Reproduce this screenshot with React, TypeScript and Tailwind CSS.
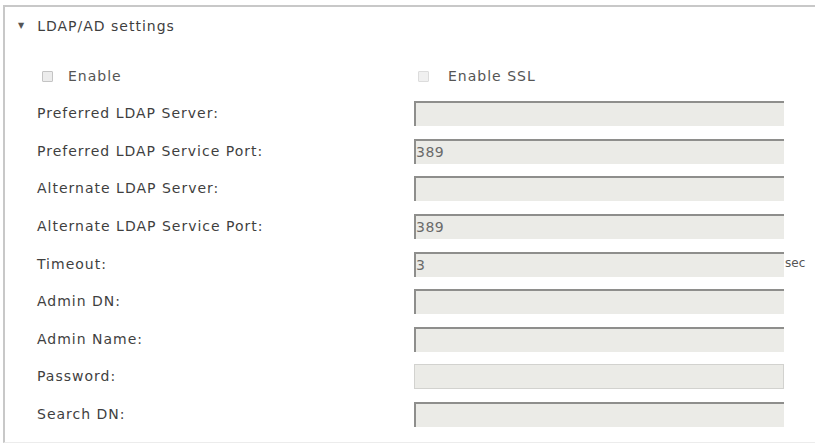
import React from "react";

type Row = { label: string; value?: string; suffix?: string; flat?: boolean };

const rows: Row[] = [
  { label: "Preferred LDAP Server:" },
  { label: "Preferred LDAP Service Port:", value: "389" },
  { label: "Alternate LDAP Server:" },
  { label: "Alternate LDAP Service Port:", value: "389" },
  { label: "Timeout:", value: "3", suffix: "sec" },
  { label: "Admin DN:" },
  { label: "Admin Name:" },
  { label: "Password:", flat: true },
  { label: "Search DN:" },
];

function Box({ faded }: { faded?: boolean }) {
  return (
    <span
      className={
        "inline-block w-[11px] h-[11px] border rounded-[1px] " +
        (faded ? "border-[#dcdcdc] bg-[#f0f0f0]" : "border-[#c4c4c4] bg-[#ececec]")
      }
    />
  );
}

function Field({ row }: { row: Row }) {
  return (
    <div className="flex items-center h-[37.6px]">
      <div className="w-[409px] pl-[32px] text-[14px] tracking-[1px] text-[#3f3f3f]">{row.label}</div>
      <div
        className={
          "w-[370px] h-[25px] bg-[#ebebe7] flex items-center text-[14px] tracking-[0.5px] text-[#6a6a6a] " +
          (row.flat
            ? "border border-[#d2d2cf]"
            : "border-t-2 border-l-2 border-t-[#8e8e8c] border-l-[#8e8e8c]")
        }
      >
        {row.value}
      </div>
      {row.suffix && <span className="ml-[1px] -mt-[2px] text-[12px] text-[#555]">{row.suffix}</span>}
    </div>
  );
}

export default function App() {
  return (
    <div
      className="w-[815px] h-[445px] bg-white pt-[5px] pl-[3px] overflow-hidden"
      style={{ fontFamily: '"DejaVu Sans", Verdana, sans-serif' }}
    >
      <div className="h-[438px] border-t-2 border-l-2 border-[#c8c8c8] border-b border-b-[#ececec]">
        <div className="flex items-center h-[38px] pl-[13px] text-[14px] tracking-[1px] text-[#3f3f3f]">
          <span className="text-[8px] mr-[12px] text-[#555]">▼</span>
          LDAP/AD settings
        </div>
        <div className="flex items-center h-[40px] mt-[11px]">
          <div className="w-[409px] pl-[37px] flex items-center gap-[15px] text-[14px] tracking-[1px] text-[#555]">
            <Box />
            Enable
          </div>
          <div className="flex items-center gap-[19px] text-[14px] tracking-[1px] text-[#555] pl-[4px]">
            <Box faded />
            Enable SSL
          </div>
        </div>
        <div className="-mt-[1px]">
          {rows.map((r) => (
            <Field key={r.label} row={r} />
          ))}
        </div>
      </div>
    </div>
  );
}
